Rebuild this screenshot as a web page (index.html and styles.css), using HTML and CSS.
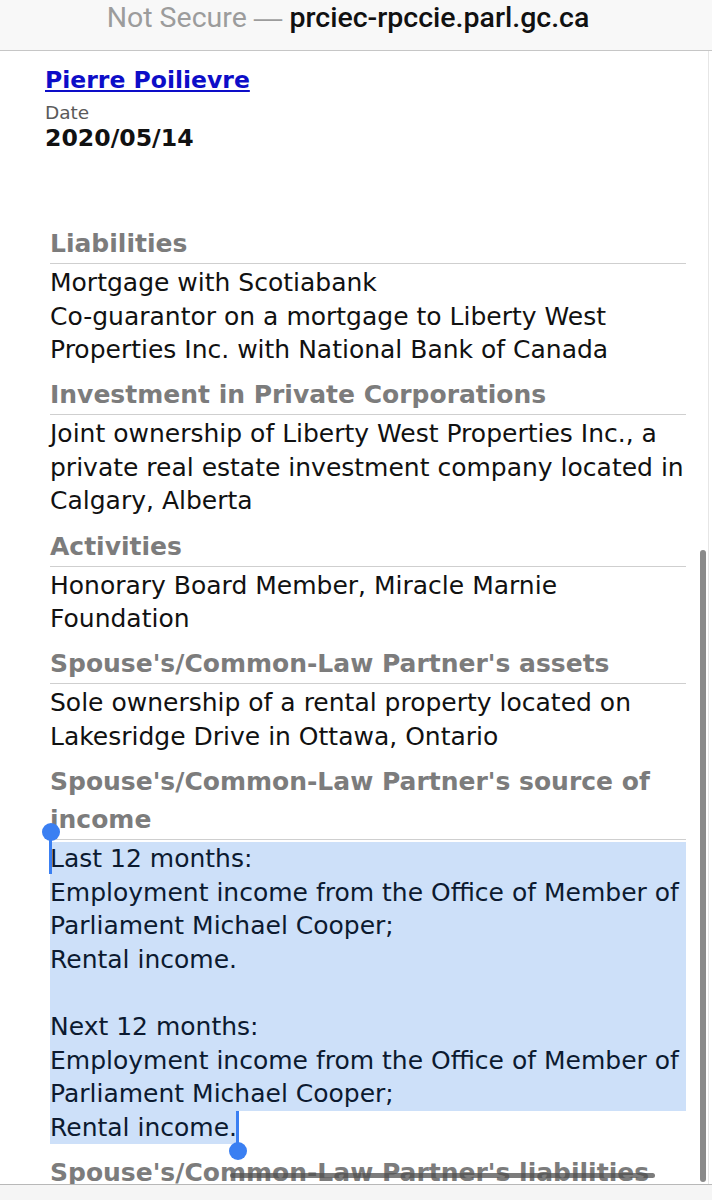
FILE: index.html
```html
<!DOCTYPE html>
<html lang="en">
<head>
<meta charset="utf-8">
<title>Declaration</title>
<link rel="stylesheet" href="styles.css">
</head>
<body>
<div class="urlbar"><span class="ns">Not Secure <span class="dash">—</span></span> <span class="domain">prciec-rpccie.parl.gc.ca</span></div>
<main class="page">
  <div class="meta">
    <a class="name" href="#">Pierre Poilievre</a>
    <div class="label">Date</div>
    <div class="date">2020/05/14</div>
  </div>
  <section class="sec first">
    <h2>Liabilities</h2>
    <p>Mortgage with Scotiabank<br>Co-guarantor on a mortgage to Liberty West Properties Inc. with National Bank of Canada</p>
  </section>
  <section class="sec">
    <h2>Investment in Private Corporations</h2>
    <p>Joint ownership of Liberty West Properties Inc., a private real estate investment company located in Calgary, Alberta</p>
  </section>
  <section class="sec">
    <h2>Activities</h2>
    <p>Honorary Board Member, Miracle Marnie Foundation</p>
  </section>
  <section class="sec">
    <h2>Spouse's/Common-Law Partner's assets</h2>
    <p>Sole ownership of a rental property located on Lakesridge Drive in Ottawa, Ontario</p>
  </section>
  <section class="sec">
    <h2>Spouse's/Common-Law Partner's source of income</h2>
    <div class="sel">
      <span class="handle start"></span>
      Last 12 months:<br>Employment income from the Office of Member of Parliament Michael Cooper;<br>Rental income.<br><br>Next 12 months:<br>Employment income from the Office of Member of Parliament Michael Cooper;
    </div>
    <div class="lastline"><span class="sel-end">Rental income.<span class="handle end"></span></span></div>
  </section>
  <section class="sec">
    <h2>Spouse's/Common-Law Partner's liabilities</h2>
  </section>
  <div class="vscroll"></div>
  <div class="hscroll"></div>
  <div class="edge"></div>
</main>
<div class="toolbar"></div>
</body>
</html>
```
FILE: styles.css
```css
html, body {
  margin: 0;
  padding: 0;
  background: #ffffff;
  height: 1200px;
  overflow: hidden;
}
body {
  font-family: "DejaVu Sans", Verdana, sans-serif;
  position: relative;
}
.urlbar {
  height: 50px;
  background: #f8f8f8;
  border-bottom: 1px solid #c6c6c6;
  font-family: Roboto, "Liberation Sans", Arial, sans-serif;
  font-size: 28.5px;
  line-height: 35px;
  text-align: center;
  padding-right: 16px;
}
.urlbar .ns { color: #9c9c9c; }
.urlbar .dash { font-family: "Liberation Sans", Arial, sans-serif; }
.urlbar .domain { color: #111; font-weight: 500; }
.page {
  position: relative;
  padding: 0 26px 0 50px;
}
.meta {
  margin-left: -5px;
  padding-top: 14px;
}
.name {
  display: block;
  font-size: 23.5px;
  font-weight: bold;
  color: #0d0dc8;
  line-height: 30px;
  text-decoration: underline;
  text-underline-offset: 2px;
}
.label {
  font-size: 18.5px;
  color: #5a5a5a;
  line-height: 24px;
  margin-top: 6px;
}
.date {
  font-size: 23.6px;
  font-weight: bold;
  color: #111;
  line-height: 26px;
}
.sec { margin-top: 9.5px; }
.sec.first { margin-top: 74px; }
h2 {
  margin: 0;
  font-size: 25px;
  line-height: 38px;
  font-weight: bold;
  color: #7c7c7c;
  border-bottom: 1px solid #cfcfcf;
}
p, .sel, .lastline {
  margin: 0;
  font-size: 25px;
  line-height: 33.6px;
  color: #111;
}
p { margin-top: 2px; }
.sel {
  margin-top: 2px;
  background: #cde0f9;
  position: relative;
  color: #0c1a30;
}
.sel-end {
  display: inline-block;
  background: #cde0f9;
  color: #0c1a30;
  position: relative;
}
.handle {
  position: absolute;
  width: 3px;
  background: #3a7ff2;
}
.handle::after {
  content: "";
  position: absolute;
  width: 18px;
  height: 18px;
  border-radius: 50%;
  background: #3a7ff2;
  left: -7.5px;
}
.handle.start {
  left: -1px;
  top: -10px;
  height: 42px;
}
.handle.start::after { top: -9px; }
.handle.end {
  right: -2px;
  top: 0;
  height: 40px;
}
.handle.end::after { bottom: -9px; }
.vscroll {
  position: absolute;
  left: 700px;
  top: 499px;
  width: 6px;
  height: 632px;
  border-radius: 3px;
  background: #8a8a8a;
}
.hscroll {
  position: absolute;
  left: 230px;
  top: 1122px;
  width: 425px;
  height: 5px;
  border-radius: 3px;
  background: rgba(80,80,80,0.75);
}
.edge {
  position: absolute;
  left: 708px;
  top: 0;
  width: 1px;
  height: 1200px;
  background: #e6e6e6;
}
.toolbar {
  position: absolute;
  left: 0;
  top: 1184px;
  width: 712px;
  height: 16px;
  background: #f5f5f5;
  border-top: 1px solid #b8b8b8;
}
```
